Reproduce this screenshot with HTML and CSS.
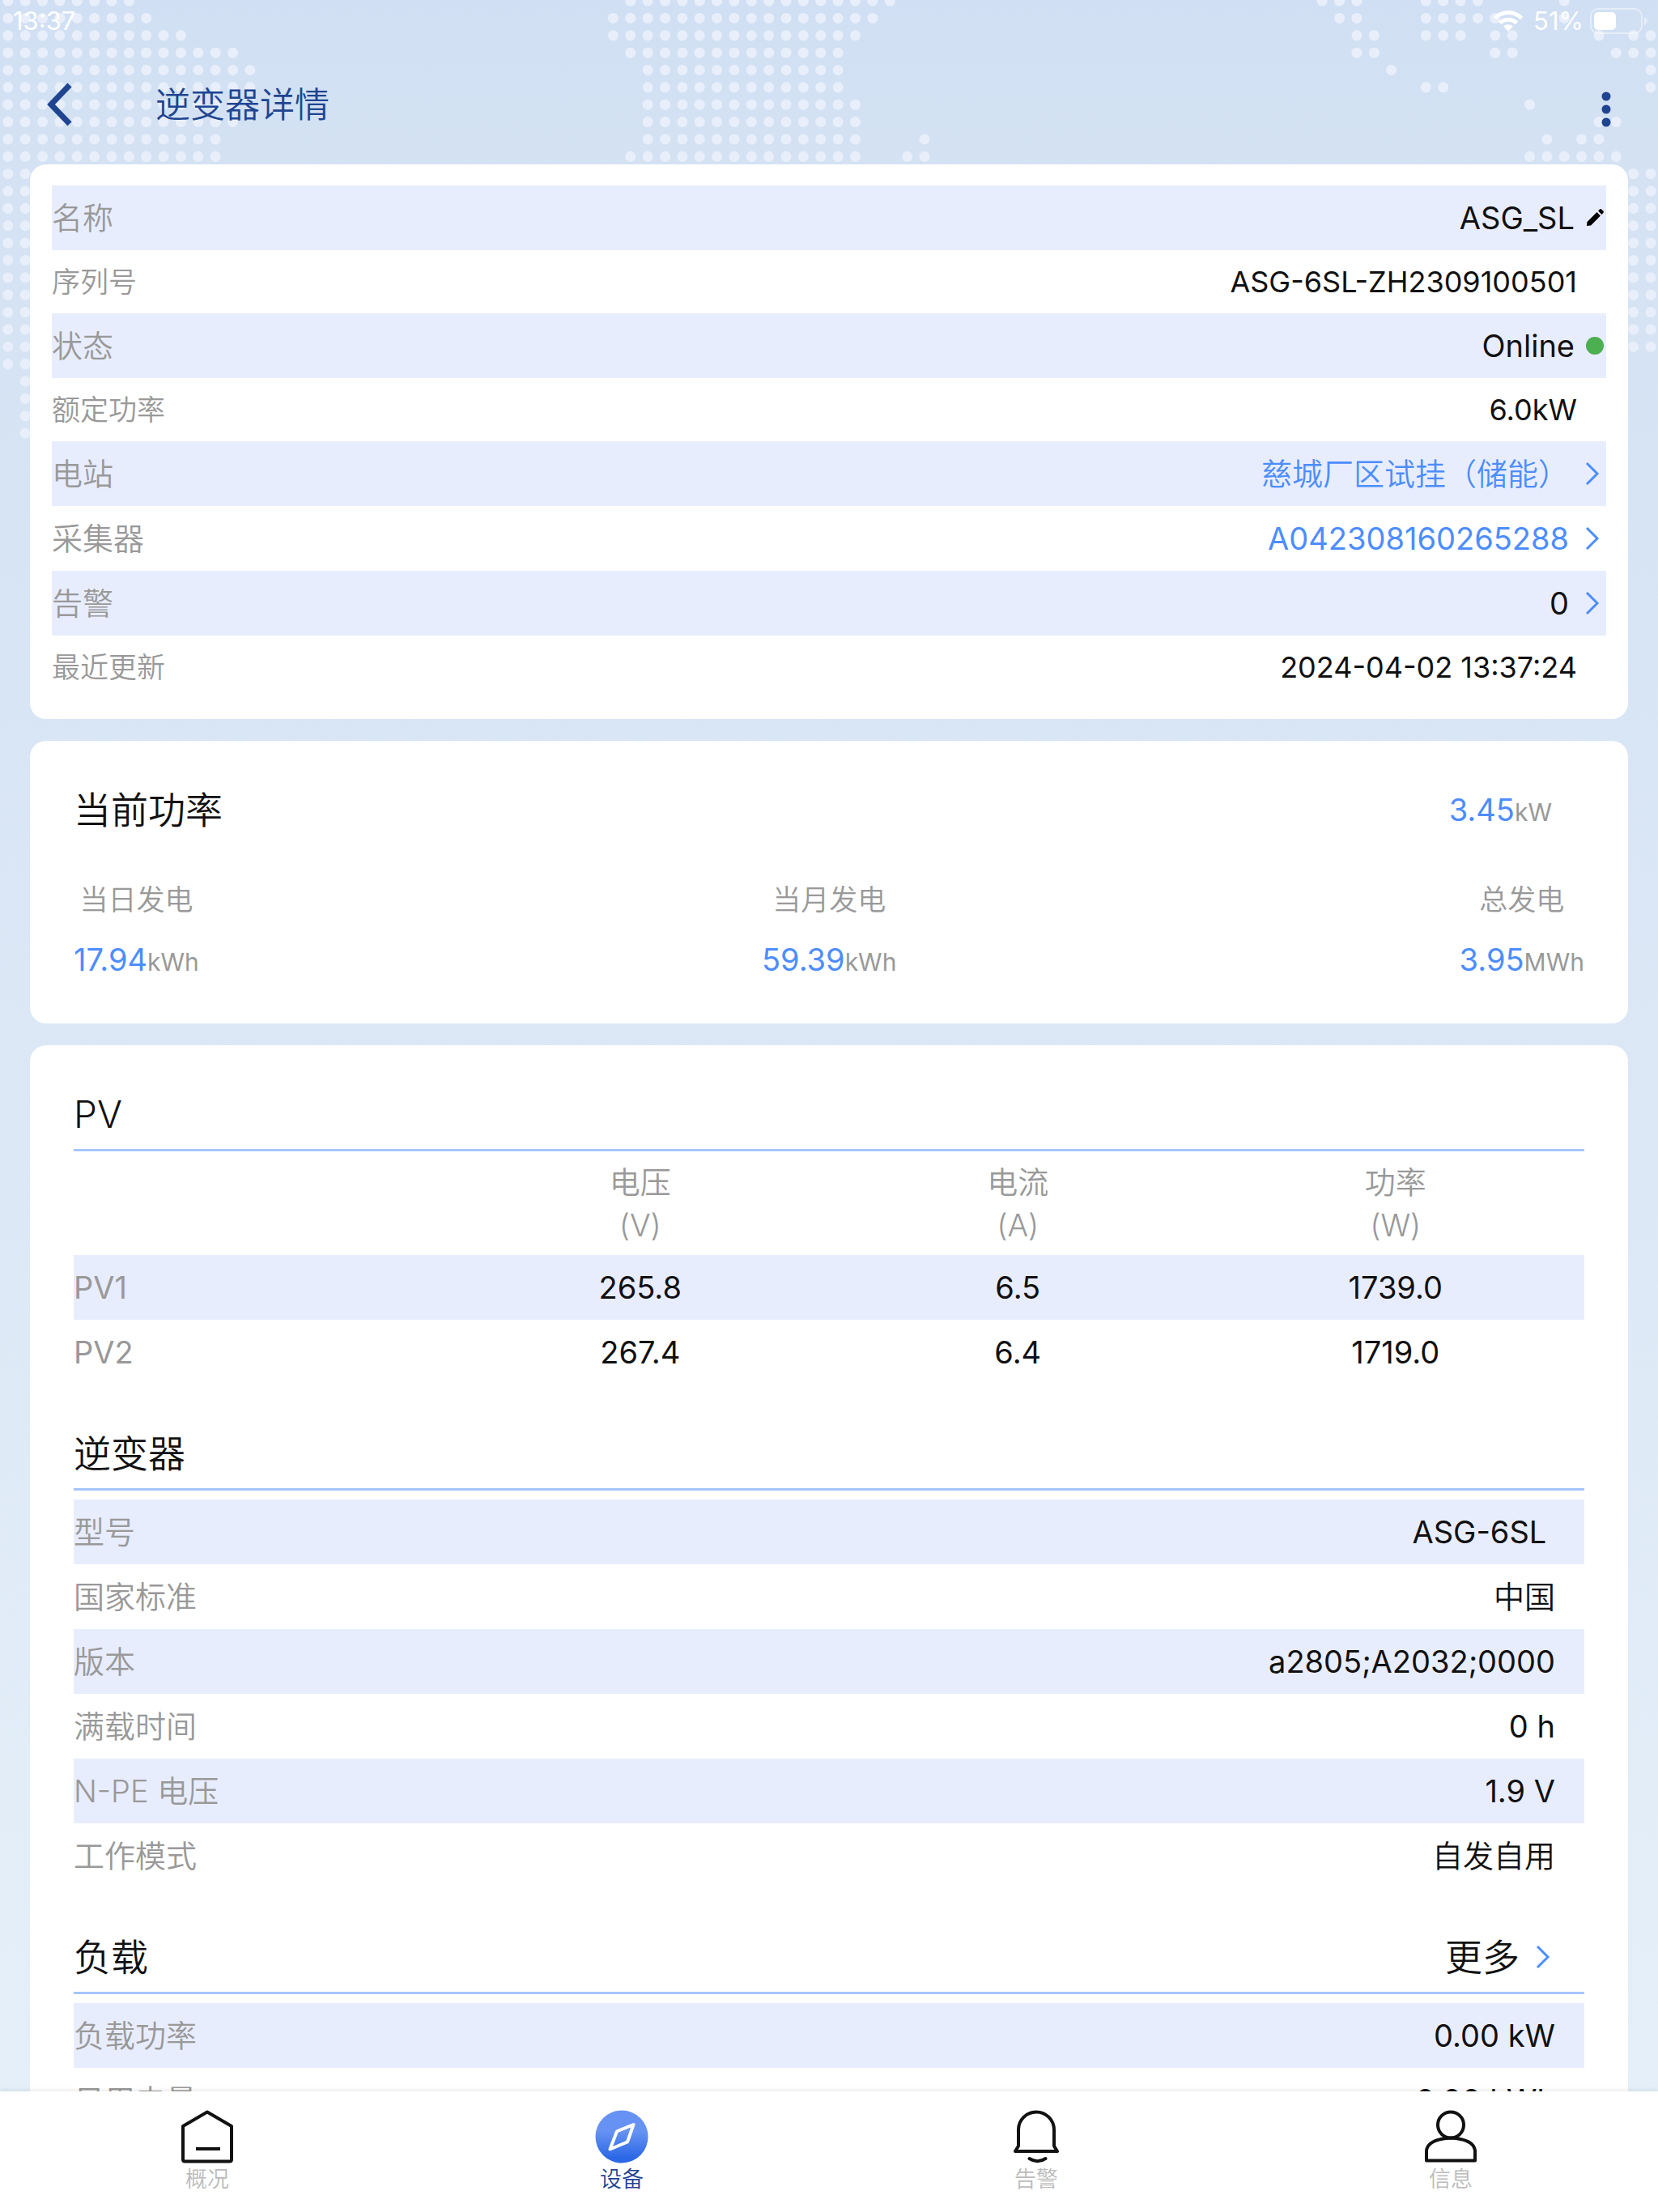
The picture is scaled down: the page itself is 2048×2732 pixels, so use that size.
FILE: index.html
```
<!DOCTYPE html>
<html lang="zh-CN">
<head>
<meta charset="utf-8">
<meta name="viewport" content="width=device-width, initial-scale=1">
<title>逆变器详情</title>
<link rel="stylesheet" href="styles.css">
</head>
<body>
<div class="app">
  <svg class="world-dots" viewBox="-0.46 -0.05 95.88 26" aria-hidden="true">
    <path d="M0 0h7.1M0 1h8.1M0 2h10.1M0 3h13.1M0 4h14.1M0 5h14.1M0 6h13.1M0 7h13.1M0 8h12.1M0 9h12.1M0 10h1.1M0 11h1.1M0 12h1.1M0 13h1.1M0 14h1.1M0 15h1.1M0 16h1.1M0 17h1.1M0 18h1.1M0 19h1.1M0 20h1.1M0 21h1.1M1 22h.1M1 23h.1M1 24h.1M1 25h.1"/>
    <path d="M36 0h15.1M35 1h15.1M35 2h14.1M36 3h12.1M37 4h11.1M37 5h11.1M37 6h12.1M37 7h12.1M37 8h12.1M53 8h.1M36 9h13.1M52 9h1.1"/>
    <path d="M76 0h2.1M82 0h3.1M90 0h.1M77 1h1.1M82 1h4.1M90 1h.1M78 2h1.1M82 2h2.1M86 2h1.1M92 2h.1M94 2h1.1M78 3h1.1M86 3h1.1M93 3h2.1M80 4h.1M95 4h.1M82 5h1.1M95 5h.1M88 6h.1M92 7h1.1M89 8h.1M91 8h1.1M88 9h5.1M94 10h1.1M94 11h1.1M94 12h1.1M94 13h1.1M94 14h1.1M94 15h1.1M94 16h1.1M94 17h1.1M94 18h1.1M94 19h1.1M94 20h1.1"/>
  </svg>

  <div class="status-bar">
    <time>13:37</time>
    <div class="status-right">
      <svg class="wifi" viewBox="0 0 38 28" aria-hidden="true">
        <path d="M2.500 10.500a23 23 0 0 1 33 0M8.500 16.500a15 15 0 0 1 21 0"/>
        <path class="wifi-core" d="M19 27l-6-6.500a9 9 0 0 1 12 0z"/>
      </svg>
      <span>51%</span>
      <svg class="battery" viewBox="0 0 72 32" aria-hidden="true">
        <rect class="battery-shell" x="1" y="1" width="63" height="30" rx="9"/>
        <rect x="5" y="5" width="27" height="22" rx="5"/>
        <path class="battery-tip" d="M67 11q4 2 4 5t-4 5z"/>
      </svg>
    </div>
  </div>

  <header class="title-bar">
    <button class="icon-button back" type="button" aria-label="返回">
      <svg viewBox="0 0 32 54" aria-hidden="true"><path d="M28 3L5 27l23 24"/></svg>
    </button>
    <h1>逆变器详情</h1>
    <button class="icon-button menu" type="button" aria-label="菜单">
      <svg viewBox="0 0 12 44" aria-hidden="true"><circle cx="6" cy="6" r="5.500"/><circle cx="6" cy="22" r="5.500"/><circle cx="6" cy="38" r="5.500"/></svg>
    </button>
  </header>

  <main class="content">
    <section class="card overview">
      <dl class="rows">
        <div class="row"><dt>名称</dt><dd class="with-mark">ASG_SL
          <button class="icon-button edit" type="button" aria-label="编辑名称"><svg viewBox="0 0 22 22" aria-hidden="true"><path d="M1 21l.5-5L13.500 4l4.500 4.500L6 20.500zM15 2.500L17 .5q1.200-1 2.500.2l1.800 1.800q1.200 1.200 0 2.500L19.500 7z"/></svg></button></dd></div>
        <div class="row compact"><dt>序列号</dt><dd>ASG-6SL-ZH2309100501</dd></div>
        <div class="row"><dt>状态</dt><dd class="with-mark">Online<span class="online-dot"></span></dd></div>
        <div class="row compact"><dt>额定功率</dt><dd>6.0kW</dd></div>
        <div class="row"><dt>电站</dt><dd class="with-chevron hanzi"><a href="#station">慈城厂区试挂（储能）<svg class="chevron" viewBox="0 0 18 30" aria-hidden="true"><path d="M2 2l13 13L2 28"/></svg></a></dd></div>
        <div class="row"><dt>采集器</dt><dd class="with-chevron"><a href="#logger">A042308160265288<svg class="chevron" viewBox="0 0 18 30" aria-hidden="true"><path d="M2 2l13 13L2 28"/></svg></a></dd></div>
        <div class="row"><dt>告警</dt><dd class="with-chevron"><a class="dark" href="#alarms">0<svg class="chevron" viewBox="0 0 18 30" aria-hidden="true"><path d="M2 2l13 13L2 28"/></svg></a></dd></div>
        <div class="row compact"><dt>最近更新</dt><dd>2024-04-02 13:37:24</dd></div>
      </dl>
    </section>

    <section class="card power">
      <div class="power-now">
        <h2>当前功率</h2>
        <p class="reading">3.45<span class="unit">kW</span></p>
      </div>
      <dl class="totals">
        <div><dt>当日发电</dt><dd class="reading">17.94<span class="unit">kWh</span></dd></div>
        <div><dt>当月发电</dt><dd class="reading">59.39<span class="unit">kWh</span></dd></div>
        <div><dt>总发电</dt><dd class="reading">3.95<span class="unit">MWh</span></dd></div>
      </dl>
    </section>

    <section class="card details">
      <div class="section-head"><h2>PV</h2></div>
      <table class="pv">
        <thead>
          <tr><td></td><th scope="col">电压<br>(V)</th><th scope="col">电流<br>(A)</th><th scope="col">功率<br>(W)</th></tr>
        </thead>
        <tbody>
          <tr><th scope="row">PV1</th><td>265.8</td><td>6.5</td><td>1739.0</td></tr>
          <tr><th scope="row">PV2</th><td>267.4</td><td>6.4</td><td>1719.0</td></tr>
        </tbody>
      </table>

      <div class="section-head"><h2>逆变器</h2></div>
      <dl class="rows spaced">
        <div class="row"><dt>型号</dt><dd>ASG-6SL&nbsp;</dd></div>
        <div class="row"><dt>国家标准</dt><dd class="hanzi">中国</dd></div>
        <div class="row"><dt>版本</dt><dd>a2805;A2032;0000</dd></div>
        <div class="row"><dt>满载时间</dt><dd>0 h</dd></div>
        <div class="row"><dt>N-PE 电压</dt><dd>1.9 V</dd></div>
        <div class="row"><dt>工作模式</dt><dd class="hanzi">自发自用</dd></div>
      </dl>

      <div class="section-head"><h2>负载</h2><a class="more" href="#load">更多<svg class="chevron" viewBox="0 0 18 30" aria-hidden="true"><path d="M2 2l13 13L2 28"/></svg></a></div>
      <dl class="rows spaced">
        <div class="row"><dt>负载功率</dt><dd>0.00 kW</dd></div>
        <div class="row"><dt>日用电量</dt><dd>0.00 kWh</dd></div>
      </dl>
    </section>
  </main>

  <nav class="tabs">
    <a href="#overview">
      <svg viewBox="0 0 66 66" aria-hidden="true"><path d="M33 2.500L63 20v41q0 2.500-2.500 2.500h-55Q3 63.500 3 61V20z"/><path class="bar" d="M21 48h26"/></svg>
      概况
    </a>
    <a class="active" href="#devices" aria-current="page">
      <svg viewBox="0 0 66 66" aria-hidden="true">
        <defs><linearGradient id="compass" x1="0" y1="0" x2="0" y2="1"><stop offset=".4" stop-color="#6692f3"/><stop offset=".9" stop-color="#2c68e6"/></linearGradient></defs>
        <circle class="disc" cx="33" cy="33" r="32.500"/>
        <path class="needle" d="M47.500 18L27 26.500L18.500 48.500L40 39.500z"/>
      </svg>
      设备
    </a>
    <a href="#alarm-list">
      <svg viewBox="0 0 66 66" aria-hidden="true"><path d="M11 24.500a22 22 0 0 1 44 0v20l4 6.500h-52l4-6.500z"/><path class="clapper" d="M24.500 60q10 6.500 20 0"/></svg>
      告警
    </a>
    <a href="#messages">
      <svg viewBox="0 0 66 66" aria-hidden="true"><ellipse cx="33" cy="18.500" rx="16" ry="16"/><path d="M3 62.500V50q2-14 30-15.500Q61 36 63 50v12.500z"/></svg>
      信息
    </a>
  </nav>
</div>
</body>
</html>
```
FILE: styles.css
```
* {
  box-sizing: border-box;
}

body {
  margin: 0;
  font-family: Inter, "Noto Sans CJK SC", sans-serif;
  font-size: 38px;
  font-weight: 350;
  line-height: 50px;
  color: #111;
}

h1, h2, p, dl, dt, dd {
  margin: 0;
  font-weight: inherit;
}

a {
  color: inherit;
  text-decoration: none;
}

.app {
  position: relative;
  display: flex;
  flex-direction: column;
  height: 100vh;
  background: linear-gradient(#d0dff3, #d4e2f3 8%, #dbe7f5 45%, #e5f0f9);
}

.world-dots {
  position: absolute;
  top: 0;
  left: 0;
  width: 100%;
  fill: none;
  stroke: #e8effa;
  stroke-width: .61;
  stroke-linecap: round;
  stroke-dasharray: 0 1;
}

.status-bar,
.title-bar,
.content,
.tabs {
  position: relative;
}

/* Status bar */

.status-bar {
  display: flex;
  justify-content: space-between;
  align-items: center;
  height: 52px;
  padding: 0 12px 0 16px;
  font-size: 31px;
  font-weight: 400;
  color: #fff;
}

.status-right {
  display: flex;
  align-items: center;
  gap: 8px;
}

.wifi {
  width: 38px;
  height: 28px;
  margin-right: 4px;
  fill: none;
  stroke: #fff;
  stroke-width: 5;
}

.wifi-core {
  fill: #fff;
  stroke: none;
}

.battery {
  width: 72px;
  height: 32px;
  fill: #fff;
}

.battery-shell {
  fill: none;
  stroke: #fff;
  stroke-width: 2;
  opacity: .45;
}

.battery-tip {
  opacity: .45;
}

/* Title bar */

.title-bar {
  display: flex;
  align-items: center;
  height: 151px;
  padding: 2px 58px 0;
  color: #1f4591;
}

.title-bar h1 {
  flex: 1;
  margin-left: 102px;
  font-size: 43px;
}

.icon-button {
  display: flex;
  padding: 0;
  border: 0;
  background: none;
  color: inherit;
}

.back svg {
  width: 32px;
  height: 54px;
  fill: none;
  stroke: currentColor;
  stroke-width: 7;
}

.menu {
  padding-top: 12px;
}

.menu svg {
  width: 12px;
  height: 44px;
  fill: currentColor;
}

/* Cards */

.content {
  flex: 1;
  min-height: 0;
  display: flex;
  flex-direction: column;
  gap: 27px;
  padding: 0 37px;
  overflow: auto;
  scrollbar-width: none;
}

.card {
  flex: none;
  border-radius: 20px;
  background: #fff;
}

.overview {
  padding: 26px 27px 25px;
}

.row {
  display: flex;
  justify-content: space-between;
  align-items: center;
  height: 80px;
  padding-right: 36px;
}

.row:nth-child(odd) {
  background: #e8edfe;
}

.row.compact {
  height: 78px;
  font-size: 36px;
}

.row.compact dt,
.totals dt {
  font-size: 35px;
}

.row dt,
.totals dt,
.pv th {
  color: #999;
}

.row dd,
.pv tbody {
  font-weight: 400;
}

.row .hanzi {
  font-weight: 350;
}

.row:has(.with-mark) {
  padding-right: 3px;
}

.row:has(.with-chevron) {
  padding-right: 8px;
}

.with-mark {
  display: flex;
  align-items: center;
  gap: 14px;
}

.edit svg {
  width: 22px;
  height: 22px;
  fill: #000;
}

.online-dot {
  width: 22px;
  height: 22px;
  border-radius: 50%;
  background: #4caf50;
}

.with-chevron a,
.more {
  display: flex;
  align-items: center;
  gap: 20px;
  color: #4d8dff;
}

.with-chevron a.dark,
.more {
  color: #111;
}

.chevron {
  width: 18px;
  height: 30px;
  fill: none;
  stroke: #4d8dff;
  stroke-width: 3;
}

/* Current power */

.power {
  padding: 55px 54px 54px;
}

.power-now {
  display: flex;
  justify-content: space-between;
  align-items: center;
  height: 60px;
  margin-bottom: 56px;
  padding-right: 40px;
}

h2,
.more {
  font-size: 46px;
  line-height: 58px;
}

.reading {
  font-weight: 400;
  color: #4d8dff;
}

.unit {
  font-size: 30px;
  line-height: 1;
  color: #999;
}

.totals {
  display: flex;
  justify-content: space-between;
  text-align: center;
}

.totals dt {
  margin-bottom: 24px;
}

/* Detail sections */

.details {
  padding: 0 54px 54px;
}

.section-head {
  display: flex;
  justify-content: space-between;
  padding: 56px 42px 14px 0;
  border-bottom: 3px solid #a6c5fd;
}

.spaced {
  padding-top: 11px;
}

.pv {
  width: 100%;
  table-layout: fixed;
  border-collapse: collapse;
  text-align: center;
}

.pv th {
  font-weight: inherit;
}

.pv td,
.pv th {
  height: 80px;
  padding: 0;
}

.pv thead th {
  padding: 12px 0 10px;
  line-height: 53px;
}

.pv tbody th {
  text-align: left;
}

.pv tbody tr:nth-child(odd) {
  background: #e8edfe;
}

/* Bottom tabs */

.tabs {
  display: grid;
  grid-template-columns: repeat(4, 1fr);
  height: 149px;
  padding-top: 23px;
  background: #fff;
  box-shadow: 0 -2px 5px rgba(0, 0, 0, .08);
  font-size: 27px;
  line-height: 40px;
  color: #bbb;
}

.tabs a {
  display: flex;
  flex-direction: column;
  align-items: center;
}

.tabs .active {
  color: #1f4591;
}

.tabs svg {
  width: 66px;
  height: 66px;
  fill: none;
  stroke: #111;
  stroke-width: 4;
  stroke-linejoin: round;
}

.tabs .bar {
  stroke-linecap: square;
}

.tabs .clapper {
  stroke-linecap: round;
}

.tabs .disc {
  fill: url(#compass);
  stroke: none;
}

.tabs .needle {
  stroke: #fff;
}
```
